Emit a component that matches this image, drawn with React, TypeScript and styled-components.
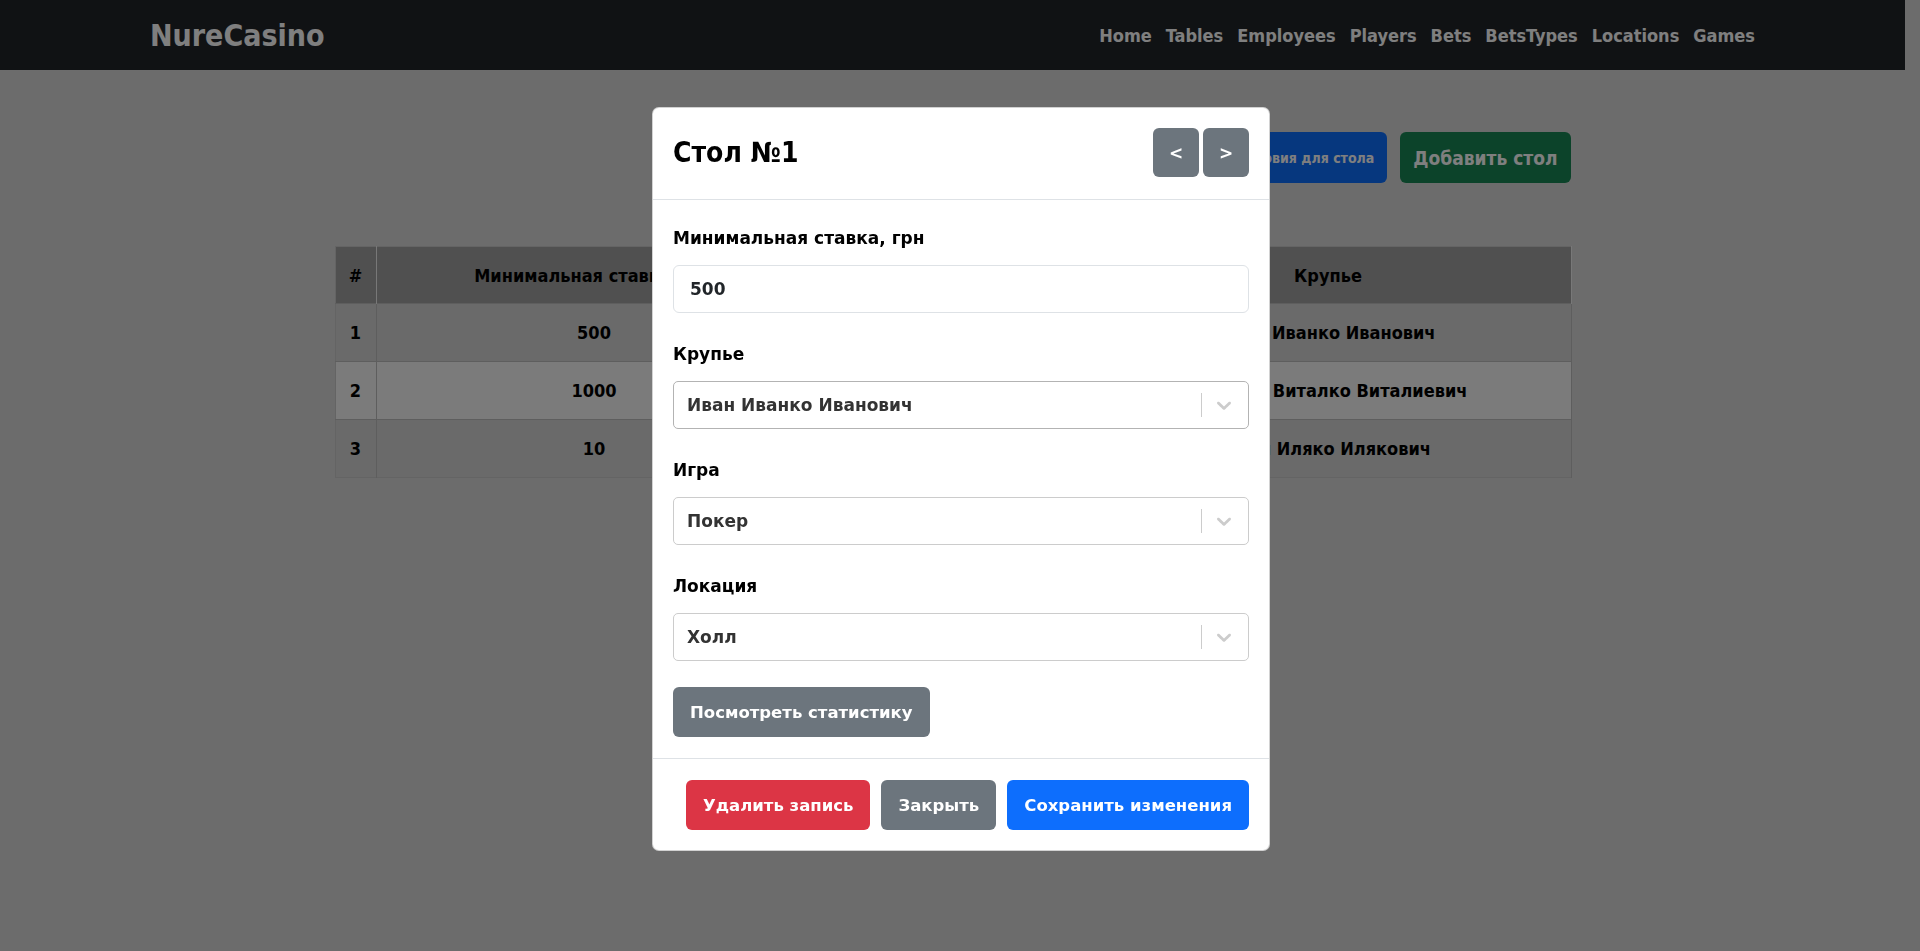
import React from "react";
import styled, { createGlobalStyle } from "styled-components";

const FONT = `"DejaVu Sans Condensed", "DejaVu Sans", "Liberation Sans", sans-serif`;
const WIDE = `"DejaVu Sans", "Liberation Sans", sans-serif`;

const GlobalStyle = createGlobalStyle`
  html, body { margin: 0; padding: 0; }
  body {
    background: #d8d8d8;
    font-family: ${FONT};
    padding-right: 15px;
    overflow: hidden;
    height: 951px;
    box-sizing: border-box;
  }
  *, *::before, *::after { box-sizing: border-box; }
`;

const Navbar = styled.nav`
  height: 70px;
  background: #212529;
  display: flex;
  align-items: center;
  justify-content: space-between;
  padding: 0 150px;
`;

const Brand = styled.a`
  font-size: 30px;
  font-weight: 700;
  color: #fff;
  text-decoration: none;
`;

const NavLinks = styled.div`
  display: flex;
  gap: 14px;
`;

const NavLink = styled.a`
  font-size: 18px;
  font-weight: 700;
  color: #fff;
  text-decoration: none;
`;

const Main = styled.main`
  width: 1236px;
  margin: 62px auto 0;
`;

const Actions = styled.div`
  display: flex;
  justify-content: flex-end;
  align-items: center;
  gap: 13px;
  margin-bottom: 63px;
`;

const PageButton = styled.button<{ $bg: string; $size: number }>`
  height: 51px;
  padding: 0 13px;
  border: none;
  border-radius: 6px;
  background: ${(p) => p.$bg};
  color: #fff;
  font-family: ${FONT};
  font-weight: 700;
  font-size: ${(p) => p.$size}px;
  white-space: nowrap;
`;

const Table = styled.table`
  width: 100%;
  border-collapse: collapse;
  table-layout: fixed;
  border: 1px solid #c8c8c8;
`;

const Th = styled.th`
  height: 57px;
  background: #a0a0a0;
  color: #000;
  font-size: 18px;
  font-weight: 700;
  text-align: center;
  border-right: 1px solid #f0f0f0;
  padding: 0 8px;
  white-space: nowrap;
  overflow: hidden;
`;

const Row = styled.tr<{ $light?: boolean }>`
  background: ${(p) => (p.$light ? "#f6f6f6" : "#d4d4d4")};
`;

const Td = styled.td`
  height: 58px;
  color: #000;
  font-size: 18px;
  font-weight: 700;
  text-align: center;
  border-top: 1px solid #bdbdbd;
  border-right: 1px solid #bdbdbd;
  padding: 0 8px;
  white-space: nowrap;
`;

const Backdrop = styled.div`
  position: fixed;
  inset: 0;
  background: rgba(0, 0, 0, 0.5);
`;

const ModalLayer = styled.div`
  position: fixed;
  inset: 0;
  display: flex;
  justify-content: center;
  align-items: flex-start;
  padding: 107px 0 0 2px;
`;

const Dialog = styled.div`
  width: 618px;
  background: #fff;
  border: 1px solid rgba(0, 0, 0, 0.175);
  border-radius: 7px;
  display: flex;
  flex-direction: column;
`;

const Header = styled.div`
  display: flex;
  align-items: center;
  justify-content: space-between;
  padding: 20px 20px 22px;
  border-bottom: 1px solid #dee2e6;
`;

const Title = styled.h3`
  margin: 0;
  font-size: 28px;
  font-weight: 700;
  color: #000;
  line-height: 1.2;
`;

const Pager = styled.div`
  display: flex;
  gap: 4px;
`;

const PagerButton = styled.button`
  width: 46px;
  height: 49px;
  border: none;
  border-radius: 6px;
  background: #6c757d;
  color: #fff;
  font-family: ${WIDE};
  font-size: 17px;
  font-weight: 700;
`;

const Body = styled.div`
  padding: 25px 20px 21px;
  display: flex;
  flex-direction: column;
  align-items: flex-start;
`;

const FormGroup = styled.div`
  width: 100%;
  margin-bottom: 28px;
  &:last-of-type {
    margin-bottom: 26px;
  }
`;

const Label = styled.label`
  display: block;
  font-family: ${WIDE};
  font-size: 17px;
  font-weight: 700;
  line-height: 26px;
  color: #000;
  margin-bottom: 14px;
`;

const Input = styled.input`
  display: block;
  width: 100%;
  height: 48px;
  border: 1px solid #dee2e6;
  border-radius: 6px;
  padding: 0 16px;
  font-family: ${WIDE};
  font-size: 17px;
  font-weight: 700;
  color: #212529;
  outline: none;
`;

const SelectControl = styled.div<{ $hover?: boolean }>`
  display: flex;
  align-items: center;
  height: 48px;
  border: 1px solid ${(p) => (p.$hover ? "#b3b3b3" : "#cccccc")};
  border-radius: 5px;
  background: #fff;
`;

const SelectValue = styled.div`
  flex: 1;
  padding-left: 13px;
  font-family: ${WIDE};
  font-size: 17px;
  font-weight: 700;
  color: #333;
`;

const Separator = styled.span`
  align-self: stretch;
  width: 1px;
  margin: 11px 0;
  background: #cccccc;
`;

const Indicator = styled.div`
  display: flex;
  align-items: center;
  padding: 0 12px 0 10px;
  color: #cccccc;
`;

const ActionButton = styled.button<{ $bg: string }>`
  flex-shrink: 0;
  height: 50px;
  padding: 0 17px;
  border: none;
  border-radius: 6px;
  background: ${(p) => p.$bg};
  color: #fff;
  font-family: ${WIDE};
  font-size: 16.5px;
  font-weight: 700;
  white-space: nowrap;
`;

const Footer = styled.div`
  display: flex;
  justify-content: flex-end;
  gap: 11px;
  padding: 21px 20px 20px;
  border-top: 1px solid #dee2e6;
`;

const Chevron = () => (
  <svg width="24" height="24" viewBox="0 0 20 20" fill="currentColor" aria-hidden="true">
    <path d="M4.516 7.548c0.436-0.446 1.043-0.481 1.576 0l3.908 3.747 3.908-3.747c0.533-0.481 1.141-0.446 1.574 0 0.436 0.445 0.408 1.197 0 1.615-0.406 0.418-4.695 4.502-4.695 4.502-0.217 0.223-0.502 0.335-0.787 0.335s-0.57-0.112-0.789-0.335c0 0-4.287-4.084-4.695-4.502s-0.436-1.170 0-1.615z" />
  </svg>
);

const Select = ({ value, hover }: { value: string; hover?: boolean }) => (
  <SelectControl $hover={hover}>
    <SelectValue>{value}</SelectValue>
    <Separator />
    <Indicator>
      <Chevron />
    </Indicator>
  </SelectControl>
);

const links = ["Home", "Tables", "Employees", "Players", "Bets", "BetsTypes", "Locations", "Games"];

const rows = [
  { id: 1, min: 500, game: "Покер", loc: "Холл", croupier: "Иван Иванко Иванович" },
  { id: 2, min: 1000, game: "Блэкджек", loc: "VIP", croupier: "Виталий Виталко Виталиевич" },
  { id: 3, min: 10, game: "Рулетка", loc: "Холл", croupier: "Илья Иляко Илякович" },
];

export default function App() {
  return (
    <>
      <GlobalStyle />
      <Navbar>
        <Brand href="#">NureCasino</Brand>
        <NavLinks>
          {links.map((l) => (
            <NavLink key={l} href="#">
              {l}
            </NavLink>
          ))}
        </NavLinks>
      </Navbar>
      <Main>
        <Actions>
          <PageButton $bg="#0d6efd" $size={14}>
            Добавить условия для стола
          </PageButton>
          <PageButton $bg="#198754" $size={19}>
            Добавить стол
          </PageButton>
        </Actions>
        <Table>
          <colgroup>
            <col style={{ width: 41 }} />
            <col style={{ width: 436 }} />
            <col style={{ width: 137 }} />
            <col style={{ width: 136 }} />
            <col style={{ width: 486 }} />
          </colgroup>
          <thead>
            <tr>
              <Th>#</Th>
              <Th>Минимальная ставка, грн</Th>
              <Th>Игра</Th>
              <Th>Локация</Th>
              <Th>Крупье</Th>
            </tr>
          </thead>
          <tbody>
            {rows.map((r, i) => (
              <Row key={r.id} $light={i === 1}>
                <Td>{r.id}</Td>
                <Td>{r.min}</Td>
                <Td>{r.game}</Td>
                <Td>{r.loc}</Td>
                <Td>{r.croupier}</Td>
              </Row>
            ))}
          </tbody>
        </Table>
      </Main>
      <Backdrop />
      <ModalLayer>
        <Dialog>
          <Header>
            <Title>Стол №1</Title>
            <Pager>
              <PagerButton>&lt;</PagerButton>
              <PagerButton>&gt;</PagerButton>
            </Pager>
          </Header>
          <Body>
            <FormGroup>
              <Label>Минимальная ставка, грн</Label>
              <Input defaultValue="500" />
            </FormGroup>
            <FormGroup>
              <Label>Крупье</Label>
              <Select value="Иван Иванко Иванович" hover />
            </FormGroup>
            <FormGroup>
              <Label>Игра</Label>
              <Select value="Покер" />
            </FormGroup>
            <FormGroup>
              <Label>Локация</Label>
              <Select value="Холл" />
            </FormGroup>
            <ActionButton $bg="#6c757d">Посмотреть статистику</ActionButton>
          </Body>
          <Footer>
            <ActionButton $bg="#dc3545">Удалить запись</ActionButton>
            <ActionButton $bg="#6c757d">Закрыть</ActionButton>
            <ActionButton $bg="#0d6efd">Сохранить изменения</ActionButton>
          </Footer>
        </Dialog>
      </ModalLayer>
    </>
  );
}
